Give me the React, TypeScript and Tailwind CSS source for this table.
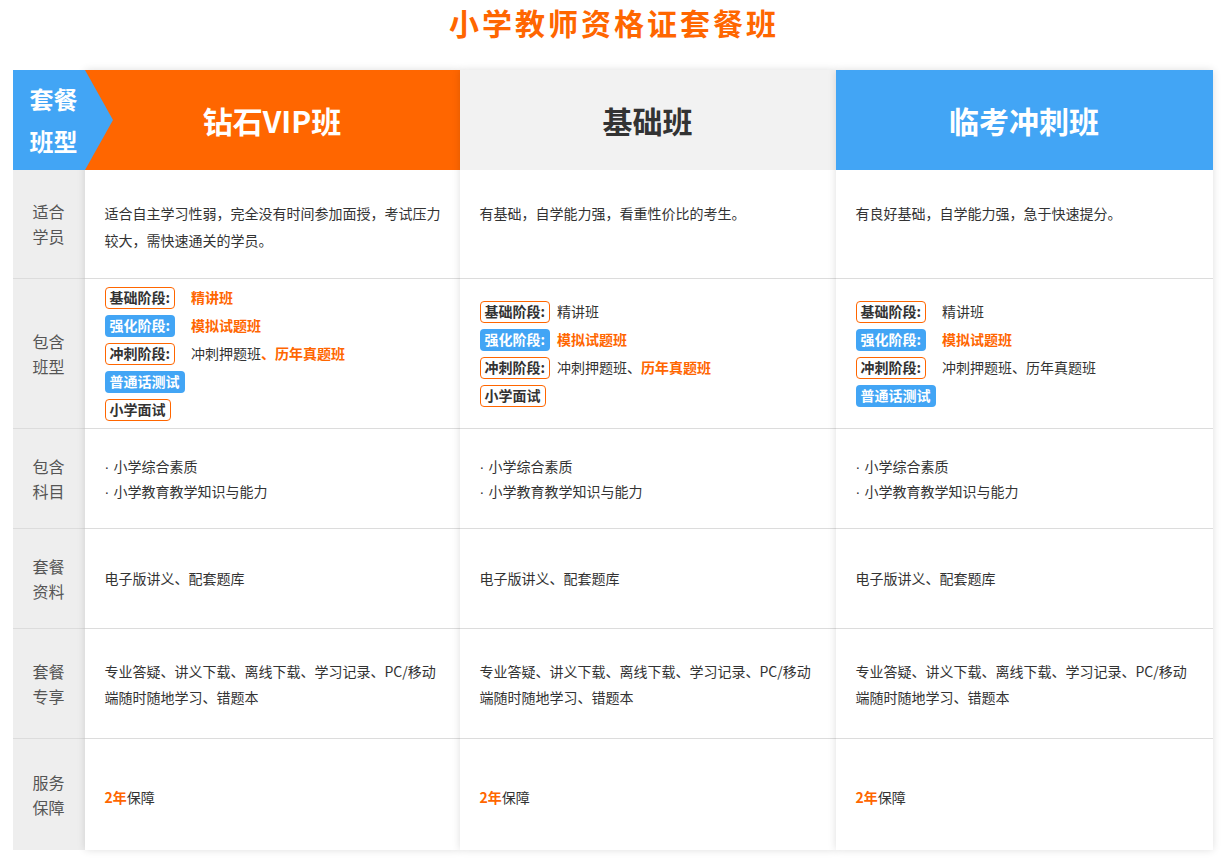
import type { ReactNode } from "react";

type Stage = { tag: string; fill?: boolean; value?: ReactNode };

type Plan = {
  name: string;
  head: string;
  fit: string;
  valueGap: string;
  stages: Stage[];
};

const Hot = ({ children }: { children: ReactNode }) => (
  <span className="font-bold text-[#ff6600]">{children}</span>
);

const PLANS: Plan[] = [
  {
    name: "钻石VIP班",
    head: "bg-[#ff6600] text-white",
    fit: "适合自主学习性弱，完全没有时间参加面授，考试压力较大，需快速通关的学员。",
    valueGap: "ml-4",
    stages: [
      { tag: "基础阶段:", value: <Hot>精讲班</Hot> },
      { tag: "强化阶段:", fill: true, value: <Hot>模拟试题班</Hot> },
      {
        tag: "冲刺阶段:",
        value: (
          <>
            冲刺押题班<Hot>、历年真题班</Hot>
          </>
        ),
      },
      { tag: "普通话测试", fill: true },
      { tag: "小学面试" },
    ],
  },
  {
    name: "基础班",
    head: "bg-[#f2f2f2] text-[#333]",
    fit: "有基础，自学能力强，看重性价比的考生。",
    valueGap: "ml-[7px]",
    stages: [
      { tag: "基础阶段:", value: "精讲班" },
      { tag: "强化阶段:", fill: true, value: <Hot>模拟试题班</Hot> },
      {
        tag: "冲刺阶段:",
        value: (
          <>
            冲刺押题班、<Hot>历年真题班</Hot>
          </>
        ),
      },
      { tag: "小学面试" },
    ],
  },
  {
    name: "临考冲刺班",
    head: "bg-[#42a5f5] text-white",
    fit: "有良好基础，自学能力强，急于快速提分。",
    valueGap: "ml-4",
    stages: [
      { tag: "基础阶段:", value: "精讲班" },
      { tag: "强化阶段:", fill: true, value: <Hot>模拟试题班</Hot> },
      { tag: "冲刺阶段:", value: "冲刺押题班、历年真题班" },
      { tag: "普通话测试", fill: true },
    ],
  },
];

const ROWS = [
  { label: ["适合", "学员"], h: "h-[109px]" },
  { label: ["包含", "班型"], h: "h-[150px]" },
  { label: ["包含", "科目"], h: "h-[100px]" },
  { label: ["套餐", "资料"], h: "h-[100px]" },
  { label: ["套餐", "专享"], h: "h-[110px]" },
  { label: ["服务", "保障"], h: "h-[111px]" },
];

function Tag({ stage }: { stage: Stage }) {
  return (
    <span
      className={
        stage.fill
          ? "inline-flex h-[22px] items-center rounded-[4px] bg-[#42a5f5] px-[5px] font-bold text-white"
          : "inline-flex h-[22px] items-center rounded-[4px] border border-[#ff6600] px-[4px] font-bold text-[#333]"
      }
    >
      {stage.tag}
    </span>
  );
}

const Dot = () => <span className="inline-block w-[9px] font-['Liberation_Sans',sans-serif]">·</span>;

function PlanColumn({ plan }: { plan: Plan }) {
  const cell = "flex border-b border-[#dcdcdc] px-5";
  return (
    <div className="relative flex flex-col bg-white shadow-[0_0_8px_rgba(0,0,0,0.13)]">
      <div className={`flex h-[100px] items-center justify-center text-[30px] font-bold ${plan.head}`}>
        {plan.name}
      </div>

      <div className={`${cell} h-[109px] items-start !pr-3 pt-[30px] leading-[27px]`}>
        <p>{plan.fit}</p>
      </div>

      <div className={`${cell} h-[150px] flex-col justify-center gap-[6px]`}>
        {plan.stages.map((s) => (
          <div key={s.tag} className="flex items-center">
            <Tag stage={s} />
            {s.value && <span className={plan.valueGap}>{s.value}</span>}
          </div>
        ))}
      </div>

      <div className={`${cell} h-[100px] flex-col justify-center leading-[24px]`}>
        <p>
          <Dot />
          小学综合素质
        </p>
        <p>
          <Dot />
          小学教育教学知识与能力
        </p>
      </div>

      <div className={`${cell} h-[100px] items-center`}>
        <p>电子版讲义、配套题库</p>
      </div>

      <div className={`${cell} h-[110px] items-center leading-[26px]`}>
        <p>专业答疑、讲义下载、离线下载、学习记录、PC/移动端随时随地学习、错题本</p>
      </div>

      <div className="flex h-[111px] items-center px-5 pt-[6px]">
        <p>
          <span className="font-bold text-[#ff6600]">2年</span>保障
        </p>
      </div>
    </div>
  );
}

export default function App() {
  return (
    <div className="min-h-[864px] bg-white font-['Noto_Sans_CJK_SC','Noto_Sans',sans-serif] text-[14px] text-[#333]">
      <h1 className="h-[70px] pl-[3px] text-center text-[30px] font-bold leading-[44px] tracking-[3px] text-[#ff6600]">
        小学教师资格证套餐班
      </h1>

      <div className="mx-auto grid w-[1200px] grid-cols-[72px_375px_376px_377px]">
        {/* label column */}
        <div className="flex flex-col bg-[#eeeeee]">
          <div className="relative z-10 flex h-[100px] flex-col items-center justify-center bg-[#42a5f5] pl-[10px] text-[24px] font-bold leading-[42px] text-white">
            <span>套餐</span>
            <span>班型</span>
            <span className="absolute top-0 -right-[28px] h-0 w-0 border-y-[50px] border-l-[28px] border-y-transparent border-l-[#42a5f5]" />
          </div>
          {ROWS.map((r, i) => (
            <div
              key={r.label.join("")}
              className={`flex flex-col items-center justify-center text-[16px] leading-[25px] text-[#555] ${r.h} ${
                i < ROWS.length - 1 ? "border-b border-[#dcdcdc]" : ""
              }`}
            >
              <span>{r.label[0]}</span>
              <span>{r.label[1]}</span>
            </div>
          ))}
        </div>

        {PLANS.map((p) => (
          <PlanColumn key={p.name} plan={p} />
        ))}
      </div>
    </div>
  );
}
